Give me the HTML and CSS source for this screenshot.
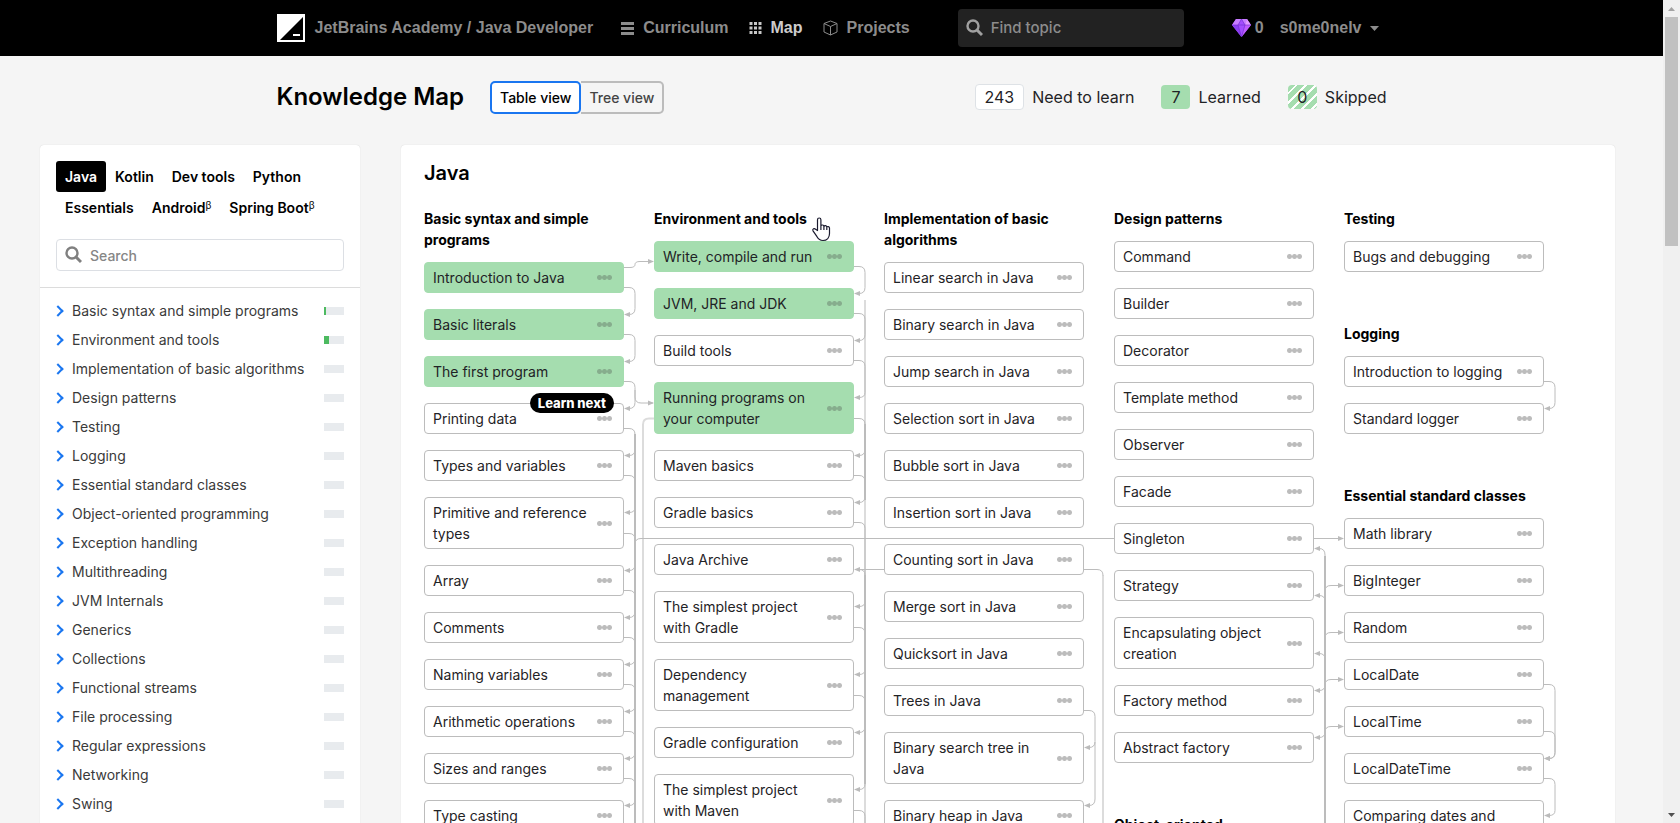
FILE: index.html
```
<!DOCTYPE html>
<html lang="en">
<head>
<meta charset="utf-8">
<title>Knowledge Map</title>
<link rel="stylesheet" href="styles.css">
</head>
<body>
<div class="window">
<div class="page">
  <header class="topbar">
    <div class="container topbar-inner">
      <a class="brand" href="#">
        <svg class="logo" viewBox="0 0 28 28" aria-hidden="true"><rect width="28" height="28" fill="#fff"/><path d="M26 3v23H3z" fill="#000"/><rect x="16" y="20" width="7" height="2" fill="#fff"/></svg>
        <span>JetBrains Academy / Java Developer</span>
      </a>
      <nav class="nav">
        <a href="#"><svg width="13" height="13" viewBox="0 0 13 13" aria-hidden="true"><path d="M0 1.500h13M0 6.500h13M0 11.500h13" stroke="#8c8c8c" stroke-width="3"/></svg>Curriculum</a>
        <a class="current" href="#"><svg width="13" height="14" viewBox="0 0 13 14" aria-hidden="true"><path d="M2 1v12M6.500 1v12M11 1v12" stroke="#c8c8c8" stroke-width="3" stroke-dasharray="3 1.500"/></svg>Map</a>
        <a href="#"><svg width="15" height="16" viewBox="0 0 15 16" aria-hidden="true"><path d="M7.500 1L14 3.500v8.500l-6.500 3L1 12V3.500zM1 3.500l6.500 3 6.500-3M7.500 6.500V15" fill="none" stroke="#8c8c8c" stroke-linejoin="round"/></svg>Projects</a>
      </nav>
      <label class="find">
        <svg width="17" height="18" viewBox="0 0 17 18" aria-hidden="true"><circle cx="7" cy="7" r="5.500" fill="none" stroke="#a0a0a0" stroke-width="2.400"/><path d="M11 11l5 5" stroke="#a0a0a0" stroke-width="3"/></svg>
        <input type="search" placeholder="Find topic" aria-label="Find topic">
      </label>
      <div class="account">
        <span class="gems"><svg width="19" height="18" viewBox="0 0 19 18" aria-hidden="true"><path d="M4 0h11l4 6-9.500 12L0 6z" fill="#a44dff"/><path d="M4 0h5.500L6 6H0zM9.500 0H15l-2 6z" fill="#c77dff"/><path d="M13 6h6l-9.500 12z" fill="#c05cff"/><path d="M0 6h6l3.500 12z" fill="#8a3df0"/><path d="M15 0l4 6h-6z" fill="#e29bff"/><path d="M0 6h19M6 6l3.500 12L13 6 9.500 0z" fill="none" stroke="#6d2bc9" stroke-width=".6"/></svg>0</span>
        <button class="user" type="button">s0me0nelv<svg width="9" height="5" viewBox="0 0 9 5" aria-hidden="true"><path d="M0 0h9L4.500 5z" fill="#8c8c8c"/></svg></button>
      </div>
    </div>
  </header>

  <div class="container heading">
    <h1>Knowledge Map</h1>
    <div class="toggle"><button class="active" type="button">Table view</button><button type="button">Tree view</button></div>
    <ul class="stats">
      <li><span class="count need">243</span>Need to learn</li>
      <li><span class="count learned">7</span>Learned</li>
      <li><span class="count skipped">0</span>Skipped</li>
    </ul>
  </div>

  <main class="content">
    <aside class="card sidebar">
      <div class="filters">
        <nav class="tabs">
          <a class="active" href="#">Java</a><a href="#">Kotlin</a><a href="#">Dev tools</a><a href="#">Python</a><a href="#">Essentials</a><a href="#">Android<small>β</small></a><a href="#">Spring Boot<small>β</small></a>
        </nav>
        <label class="search">
          <svg width="17" height="18" viewBox="0 0 17 18" aria-hidden="true"><circle cx="7" cy="7" r="5.500" fill="none" stroke="#808080" stroke-width="2.400"/><path d="M11 11l5 5" stroke="#808080" stroke-width="3"/></svg>
          <input type="search" placeholder="Search" aria-label="Search">
        </label>
      </div>
      <ul class="topics">
        <li><a href="#">Basic syntax and simple programs</a><span class="bar"><span style="width:10%"></span></span></li>
        <li><a href="#">Environment and tools</a><span class="bar"><span style="width:25%"></span></span></li>
        <li><a href="#">Implementation of basic algorithms</a><span class="bar"></span></li>
        <li><a href="#">Design patterns</a><span class="bar"></span></li>
        <li><a href="#">Testing</a><span class="bar"></span></li>
        <li><a href="#">Logging</a><span class="bar"></span></li>
        <li><a href="#">Essential standard classes</a><span class="bar"></span></li>
        <li><a href="#">Object-oriented programming</a><span class="bar"></span></li>
        <li><a href="#">Exception handling</a><span class="bar"></span></li>
        <li><a href="#">Multithreading</a><span class="bar"></span></li>
        <li><a href="#">JVM Internals</a><span class="bar"></span></li>
        <li><a href="#">Generics</a><span class="bar"></span></li>
        <li><a href="#">Collections</a><span class="bar"></span></li>
        <li><a href="#">Functional streams</a><span class="bar"></span></li>
        <li><a href="#">File processing</a><span class="bar"></span></li>
        <li><a href="#">Regular expressions</a><span class="bar"></span></li>
        <li><a href="#">Networking</a><span class="bar"></span></li>
        <li><a href="#">Swing</a><span class="bar"></span></li>
      </ul>
    </aside>

    <section class="card board">
      <h2>Java</h2>
      <div class="map">
        <svg class="links" width="1150" height="640" viewBox="424 208 1150 640" aria-hidden="true">
          <defs><marker id="arrow" markerWidth="6" markerHeight="6" refX="5" refY="3" orient="auto" markerUnits="userSpaceOnUse"><path d="M0 .5l6 2.500-6 2.500z" fill="#bbb"/></marker></defs>
          <!-- long rails between columns -->
          <g class="rail light"><path d="M654 418.500h-5q-6 0-6 6V848M865 300V848M1103 575V848"/></g>
          <g class="rail"><path d="M635 434V848M865 424V500M865 575V784M1325 556V848"/></g>
          <!-- basic syntax -->
          <g class="link">
            <path d="M624 267.500h6q5 0 5-3t5-3h13"/>
            <path d="M624 287.500h5q6 0 6 6v15q0 6-6 6h-4"/>
            <path d="M624 334.500h5q6 0 6 6v15q0 6-6 6h-4"/>
            <path d="M624 381.500h5q6 0 6 6v15q0 6-6 6h-4"/>
            <path d="M635 390v7q0 6 6 6h12"/>
            <path d="M624 428.500h5q6 0 6 6v15q0 6-6 6h-4"/>
            <path d="M624 475.500h5q6 0 6 6v26q0 5-6 5h-4"/>
            <path d="M624 533.500h5q6 0 6 6v25q0 6-6 6h-4"/>
            <path d="M624 590.500h5q6 0 6 6v15q0 6-6 6h-4"/>
            <path d="M624 637.500h5q6 0 6 6v15q0 6-6 6h-4"/>
            <path d="M624 684.500h5q6 0 6 6v15q0 6-6 6h-4"/>
            <path d="M624 731.500h5q6 0 6 6v15q0 6-6 6h-4"/>
            <path d="M624 778.500h5q6 0 6 6v15q0 6-6 6h-4"/>
            <path d="M635 550v-6q0-5.500 6-5.500H1343"/>
          </g>
          <!-- environment and tools -->
          <g class="link">
            <path d="M854 266.500h5q6 0 6 6v15q0 6-6 6h-4"/>
            <path d="M854 313.500h5q6 0 6 6v15q0 6-6 6h-4"/>
            <path d="M854 360.500h5q6 0 6 6v26q0 5-6 5h-4"/>
            <path d="M854 418.500h5q6 0 6 6v25q0 6-6 6h-4"/>
            <path d="M854 475.500h5q6 0 6 6v15q0 6-6 6h-4"/>
            <path d="M854 522.500h5q6 0 6 6v73q0 5-6 5h-4"/>
            <path d="M1084 569.500H855"/>
            <path class="plain" d="M865 582v-7q0-5.500-6-5.500"/>
            <path d="M854 627.500h5q6 0 6 6v36q0 5-6 5h-4"/>
            <path d="M854 695.500h5q6 0 6 6v25q0 6-6 6h-4"/>
            <path d="M865 770v14q0 5.500-6 5.500h-4"/>
            <path class="plain" d="M854 810.500h5q6 0 6 6v30"/>
          </g>
          <!-- algorithms and patterns -->
          <g class="link">
            <path d="M1084 710.500h5q6 0 6 6v25q0 6-6 6h-4"/>
            <path d="M1095 742v57q0 6.500-6 6.500h-4"/>
            <path class="plain" d="M1084 569.500h13q6 0 6 6"/>
            <path d="M1325 562v-7q0-6.500-6-6.500h-4"/>
            <path d="M1325 608v-7q0-5.500-6-5.500h-4"/>
            <path d="M1325 666v-7q0-5.500-6-5.500h-4"/>
            <path d="M1325 678v7q0 5.500-6 5.500h-4"/>
            <path d="M1325 725v7q0 5.500-6 5.500h-4"/>
            <path d="M1325 598v-7q0-5.500 6-5.500h12"/>
            <path d="M1325 645v-7q0-5.500 6-5.500h12"/>
            <path d="M1325 692v-7q0-5.500 6-5.500h12"/>
            <path d="M1325 739v-7q0-5.500 6-5.500h12"/>
          </g>
          <!-- logging and standard classes -->
          <g class="link">
            <path d="M1544 381.500h5q6 0 6 6v15q0 6-6 6h-4"/>
            <path d="M1544 684.500h5q6 0 6 6v62q0 6-6 6h-4"/>
            <path d="M1544 731.500h5q6 0 6 6v15q0 6-6 6h-4"/>
            <path d="M1544 778.500h5q6 0 6 6v26q0 5-6 5h-4"/>
          </g>
        </svg>

        <div class="column">
          <section class="group">
            <h3>Basic syntax and simple programs</h3>
            <div class="node done"><a href="#">Introduction to Java</a><button type="button" aria-label="More"></button></div>
            <div class="node done"><a href="#">Basic literals</a><button type="button" aria-label="More"></button></div>
            <div class="node done"><a href="#">The first program</a><button type="button" aria-label="More"></button></div>
            <div class="node"><a href="#">Printing data</a><button type="button" aria-label="More"></button><span class="badge">Learn next</span></div>
            <div class="node"><a href="#">Types and variables</a><button type="button" aria-label="More"></button></div>
            <div class="node"><a href="#">Primitive and reference types</a><button type="button" aria-label="More"></button></div>
            <div class="node"><a href="#">Array</a><button type="button" aria-label="More"></button></div>
            <div class="node"><a href="#">Comments</a><button type="button" aria-label="More"></button></div>
            <div class="node"><a href="#">Naming variables</a><button type="button" aria-label="More"></button></div>
            <div class="node"><a href="#">Arithmetic operations</a><button type="button" aria-label="More"></button></div>
            <div class="node"><a href="#">Sizes and ranges</a><button type="button" aria-label="More"></button></div>
            <div class="node"><a href="#">Type casting</a><button type="button" aria-label="More"></button></div>
          </section>
        </div>

        <div class="column">
          <section class="group">
            <h3 class="hovered">Environment and tools
              <svg class="pointer" width="20" height="25" viewBox="0 0 20 25" aria-hidden="true"><path d="M6.500 13.500V2.800c0-2.400 3.400-2.400 3.400 0V9c.3-1.500 3-1.300 3 .4.500-1.200 2.900-1 2.900.7.600-1 2.700-.7 2.700 1v5.400c0 4-2.500 7-6.500 7-3 0-4.700-1.400-6-3.800L2 13.800c-.9-1.900 1.300-3 2.600-1.500zM9.900 9v4M12.900 9.400V13M15.800 10.200V13" fill="#fff" stroke="#1a1a2e" stroke-width="1.200" stroke-linejoin="round"/></svg>
            </h3>
            <div class="node done"><a href="#">Write, compile and run</a><button type="button" aria-label="More"></button></div>
            <div class="node done"><a href="#">JVM, JRE and JDK</a><button type="button" aria-label="More"></button></div>
            <div class="node"><a href="#">Build tools</a><button type="button" aria-label="More"></button></div>
            <div class="node done"><a href="#">Running programs on your computer</a><button type="button" aria-label="More"></button></div>
            <div class="node"><a href="#">Maven basics</a><button type="button" aria-label="More"></button></div>
            <div class="node"><a href="#">Gradle basics</a><button type="button" aria-label="More"></button></div>
            <div class="node"><a href="#">Java Archive</a><button type="button" aria-label="More"></button></div>
            <div class="node"><a href="#">The simplest project with Gradle</a><button type="button" aria-label="More"></button></div>
            <div class="node"><a href="#">Dependency management</a><button type="button" aria-label="More"></button></div>
            <div class="node"><a href="#">Gradle configuration</a><button type="button" aria-label="More"></button></div>
            <div class="node"><a href="#">The simplest project with Maven</a><button type="button" aria-label="More"></button></div>
          </section>
        </div>

        <div class="column">
          <section class="group">
            <h3>Implementation of basic algorithms</h3>
            <div class="node"><a href="#">Linear search in Java</a><button type="button" aria-label="More"></button></div>
            <div class="node"><a href="#">Binary search in Java</a><button type="button" aria-label="More"></button></div>
            <div class="node"><a href="#">Jump search in Java</a><button type="button" aria-label="More"></button></div>
            <div class="node"><a href="#">Selection sort in Java</a><button type="button" aria-label="More"></button></div>
            <div class="node"><a href="#">Bubble sort in Java</a><button type="button" aria-label="More"></button></div>
            <div class="node"><a href="#">Insertion sort in Java</a><button type="button" aria-label="More"></button></div>
            <div class="node"><a href="#">Counting sort in Java</a><button type="button" aria-label="More"></button></div>
            <div class="node"><a href="#">Merge sort in Java</a><button type="button" aria-label="More"></button></div>
            <div class="node"><a href="#">Quicksort in Java</a><button type="button" aria-label="More"></button></div>
            <div class="node"><a href="#">Trees in Java</a><button type="button" aria-label="More"></button></div>
            <div class="node"><a href="#">Binary search tree in Java</a><button type="button" aria-label="More"></button></div>
            <div class="node"><a href="#">Binary heap in Java</a><button type="button" aria-label="More"></button></div>
          </section>
        </div>

        <div class="column">
          <section class="group">
            <h3>Design patterns</h3>
            <div class="node"><a href="#">Command</a><button type="button" aria-label="More"></button></div>
            <div class="node"><a href="#">Builder</a><button type="button" aria-label="More"></button></div>
            <div class="node"><a href="#">Decorator</a><button type="button" aria-label="More"></button></div>
            <div class="node"><a href="#">Template method</a><button type="button" aria-label="More"></button></div>
            <div class="node"><a href="#">Observer</a><button type="button" aria-label="More"></button></div>
            <div class="node"><a href="#">Facade</a><button type="button" aria-label="More"></button></div>
            <div class="node"><a href="#">Singleton</a><button type="button" aria-label="More"></button></div>
            <div class="node"><a href="#">Strategy</a><button type="button" aria-label="More"></button></div>
            <div class="node"><a href="#">Encapsulating object creation</a><button type="button" aria-label="More"></button></div>
            <div class="node"><a href="#">Factory method</a><button type="button" aria-label="More"></button></div>
            <div class="node"><a href="#">Abstract factory</a><button type="button" aria-label="More"></button></div>
          </section>
          <section class="group">
            <h3>Object-oriented programming</h3>
          </section>
        </div>

        <div class="column">
          <section class="group">
            <h3>Testing</h3>
            <div class="node"><a href="#">Bugs and debugging</a><button type="button" aria-label="More"></button></div>
          </section>
          <section class="group">
            <h3>Logging</h3>
            <div class="node"><a href="#">Introduction to logging</a><button type="button" aria-label="More"></button></div>
            <div class="node"><a href="#">Standard logger</a><button type="button" aria-label="More"></button></div>
          </section>
          <section class="group">
            <h3>Essential standard classes</h3>
            <div class="node"><a href="#">Math library</a><button type="button" aria-label="More"></button></div>
            <div class="node"><a href="#">BigInteger</a><button type="button" aria-label="More"></button></div>
            <div class="node"><a href="#">Random</a><button type="button" aria-label="More"></button></div>
            <div class="node"><a href="#">LocalDate</a><button type="button" aria-label="More"></button></div>
            <div class="node"><a href="#">LocalTime</a><button type="button" aria-label="More"></button></div>
            <div class="node"><a href="#">LocalDateTime</a><button type="button" aria-label="More"></button></div>
            <div class="node"><a href="#">Comparing dates and times</a><button type="button" aria-label="More"></button></div>
          </section>
        </div>
      </div>
    </section>
  </main>
</div>
<div class="scrollbar" aria-hidden="true">
  <svg width="17" height="17" viewBox="0 0 17 17"><path d="M5 11h7L8.500 7z" fill="#a3a3a3"/></svg>
  <div class="track"><div class="thumb"></div></div>
  <svg width="17" height="17" viewBox="0 0 17 17"><path d="M5 7h7l-3.500 4z" fill="#505050"/></svg>
</div>
</div>
</body>
</html>
```
FILE: styles.css
```
* { box-sizing: border-box; }

body {
  margin: 0;
  background: #f5f5f5;
  color: #1f2326;
  font: 14px/21px Inter, "Liberation Sans", sans-serif;
}

a { color: inherit; text-decoration: none; }
button, input { font: inherit; color: inherit; border: 0; background: none; padding: 0; }
ul { list-style: none; margin: 0; padding: 0; }
h1, h2, h3 { margin: 0; color: #000; }
svg { display: block; flex: none; }

.window { display: flex; height: 100vh; overflow: hidden; }
.page { flex: 1; min-width: 0; }
.container { max-width: 1110px; margin: 0 auto; display: flex; align-items: center; }

/* Top bar */
.topbar {
  background: #000;
  color: #8c8c8c;
  font: bold 16px/24px "Liberation Sans", Arial, sans-serif;
}
.topbar-inner { height: 56px; }
.brand { display: flex; align-items: center; gap: 10px; }
.logo { width: 28px; height: 28px; }
.nav { display: flex; gap: 20px; margin-left: 28px; }
.nav a { display: flex; align-items: center; gap: 9px; }
.nav .current { color: #ccc; }
.find {
  display: flex;
  align-items: center;
  gap: 8px;
  width: 226px;
  height: 38px;
  margin-left: 48px;
  padding: 0 8px;
  border-radius: 4px;
  background: #222;
}
.find input { flex: 1; min-width: 0; outline: 0; font-family: Inter, sans-serif; font-size: 15px; font-weight: 500; }
.find input::placeholder { color: #8c8c8c; opacity: 1; }
.account { display: flex; align-items: center; gap: 16px; margin-left: auto; padding-right: 8px; }
.gems { display: flex; align-items: center; gap: 4px; }
.user { display: flex; align-items: center; gap: 8px; }

/* Heading row */
.heading { height: 89px; padding-bottom: 7px; }
.heading h1 { font-size: 24px; line-height: 32px; font-weight: 600; }
.toggle { display: flex; margin-left: 26px; }
.toggle button {
  height: 33px;
  padding: 0 8px;
  border: 2px solid #bcbcbc;
  border-left: 0;
  border-radius: 0 5px 5px 0;
  color: #444;
  font-weight: 500;
}
.toggle .active {
  border: 2px solid #1a76f0;
  border-radius: 5px;
  background: #fff;
  color: #000;
}
.stats { display: flex; gap: 27px; margin-left: auto; font-size: 16px; }
.stats li { display: flex; align-items: center; gap: 8px; }
.count { min-width: 29px; padding: 0 9px; line-height: 24px; border-radius: 4px; text-align: center; }
.need { background: #fff; border: 1px solid #dee2e6; }
.learned { background: #a5ddaf; }
.skipped { background: repeating-linear-gradient(135deg, #a5ddaf 0 5px, #fff 5px 7px); }

/* Content cards */
.content { display: flex; align-items: flex-start; gap: 41px; padding: 0 48px 0 40px; }
.card { background: #fff; border-radius: 4px; box-shadow: 0 0 1px 0 #ccc; }

.sidebar { flex: none; width: 320px; padding-bottom: 16px; }
.filters { padding: 16px; border-bottom: 1px solid #dcdcdc; }
.tabs { display: flex; flex-wrap: wrap; color: #000; font-weight: 600; }
.tabs a { padding: 5px 9px; border-radius: 3px; }
.tabs .active { background: #000; color: #fff; }
.tabs small { font-size: 10px; font-weight: 400; vertical-align: top; line-height: 16px; }
.search {
  display: flex;
  align-items: center;
  gap: 8px;
  height: 32px;
  margin-top: 16px;
  padding: 0 8px;
  border: 1px solid #dcdfe4;
  border-radius: 4px;
}
.search input { flex: 1; min-width: 0; outline: 0; font-weight: 500; }
.search input::placeholder { color: #868686; opacity: 1; }

.topics { padding: 8px 16px 8px 14px; color: #3a3a3a; }
.topics li { display: flex; align-items: center; justify-content: space-between; height: 29px; }
.topics a { display: flex; align-items: center; gap: 10px; white-space: nowrap; }
.topics a::before {
  content: "";
  width: 6px;
  height: 6px;
  border: solid #1a76f0;
  border-width: 2px 2px 0 0;
  transform: rotate(45deg);
}
.bar { width: 20px; height: 8px; background: #e8ebee; }
.bar span { display: block; height: 100%; background: #4dba60; }

/* Topic map */
.board { flex: 1; min-width: 0; padding: 14px 23px 40px; }
.board h2 { font-size: 20px; line-height: 28px; font-weight: 600; }
.map { position: relative; display: flex; gap: 30px; margin-top: 21px; }
.links { position: absolute; top: 0; left: 0; fill: none; }
.link path { stroke: #bcbcbc; stroke-width: 1; marker-end: url(#arrow); }
.link .plain { marker-end: none; }
.rail path { stroke: #bcbcbc; stroke-width: 2; }
.rail.light path { stroke: #dcdcdc; }

.column { position: relative; flex: none; width: 200px; display: flex; flex-direction: column; gap: 51px; }
.group { display: flex; flex-direction: column; gap: 16px; }
.group h3 { font-size: 14px; line-height: 21px; font-weight: 700; margin-bottom: -4px; }
.hovered { position: relative; }
.pointer { position: absolute; left: 157px; top: 9px; z-index: 1; }

.node {
  position: relative;
  display: flex;
  align-items: center;
  justify-content: space-between;
  gap: 6px;
  padding: 4px 11px 4px 8px;
  border: 1px solid #bcbcbc;
  border-radius: 4px;
  background: #fff;
}
.node.done { background: #a5ddaf; border-color: #a5ddaf; }
.node button {
  flex: none;
  width: 15px;
  height: 5px;
  background: radial-gradient(circle, #bcbcbc 2px, transparent 3px) 0 0 / 5px 5px;
}
.node.done button { background-image: radial-gradient(circle, #86ad8d 2px, transparent 3px); }
.badge {
  position: absolute;
  top: -11px;
  right: 9px;
  padding: 0 8px;
  border-radius: 10px;
  background: #000;
  color: #fff;
  font-size: 13px;
  line-height: 20px;
  font-weight: 800;
}

/* Window scrollbar */
.scrollbar { display: flex; flex-direction: column; flex: none; width: 17px; background: #f0f0f0; }
.track { flex: 1; padding: 0 2px; }
.thumb { height: 29%; background: #c1c1c1; }
```
